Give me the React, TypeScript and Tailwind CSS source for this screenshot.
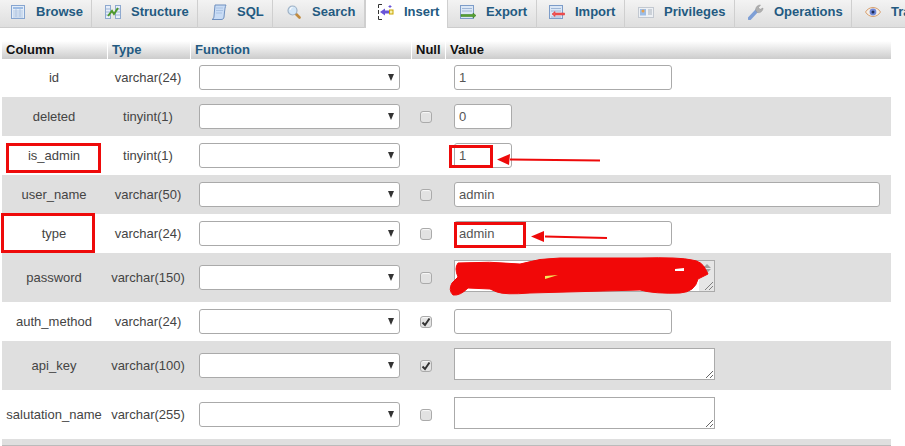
import React from 'react'

const BLUE = '#235a81'

function BrowseIcon() {
  return (
    <svg width="14" height="14" viewBox="0 0 14 14">
      <rect x="0.5" y="0.5" width="13" height="13" fill="#e3edf9" stroke="#86a5d0" />
      <rect x="2" y="2" width="10" height="2" fill="#9dbce4" />
      <path d="M2 6h10M2 8h10M2 10h10M2 12h10M5 4v8M9 4v8" stroke="#a9c0de" strokeWidth="0.8" />
    </svg>
  )
}

function StructureIcon() {
  return (
    <svg width="16" height="16" viewBox="0 0 16 16">
      <rect x="0.5" y="1.5" width="5" height="13" fill="#e6eefa" stroke="#8ea9cf" />
      <rect x="10.5" y="1.5" width="5" height="13" fill="#e6eefa" stroke="#8ea9cf" />
      <path d="M1 5h4M1 8h4M1 11h4M11 5h4M11 8h4M11 11h4" stroke="#9db5d6" />
      <path d="M3 12 L7 7 L9 10 L13 4" fill="none" stroke="#4e9a2e" strokeWidth="2" />
    </svg>
  )
}

function SqlIcon() {
  return (
    <svg width="16" height="16" viewBox="0 0 16 16">
      <path d="M4 1 H15 C14 3 14 5 13.5 8 L13 13 C12.8 15 11.5 15.5 10 15.5 H1 C2.5 15 3 13.5 3 12 Z" fill="#c9dcf5" stroke="#6e8fbf" />
      <path d="M5 4h7M5 6.500h7M5 9h6" stroke="#a9c2e4" />
    </svg>
  )
}

function SearchIcon() {
  return (
    <svg width="14" height="14" viewBox="0 0 14 14">
      <path d="M8.500 8.500 L12.500 12.500" stroke="#c08a3e" strokeWidth="2.600" strokeLinecap="round" />
      <circle cx="5.500" cy="5.500" r="4.500" fill="#d3e6f7" stroke="#9fb2c6" strokeWidth="1.200" />
      <path d="M3 5 a2.500 2.500 0 0 1 2.500 -2.500" fill="none" stroke="#fff" />
    </svg>
  )
}

function InsertIcon() {
  return (
    <svg width="16" height="16" viewBox="0 0 16 16">
      <path d="M0.500 4V0.500H4M0.500 12V15.500H4M0.500 6V10" fill="none" stroke="#333" />
      <path d="M2 8 L7 4.500 V6.500 H11 V9.500 H7 V11.500 Z" fill="#6a55d8" />
      <rect x="11.500" y="6" width="3.500" height="4" fill="#f6f1b0" stroke="#c9a400" />
      <path d="M12 1v3M10.500 2.500h3" stroke="#6a55d8" />
    </svg>
  )
}

function ExportIcon() {
  return (
    <svg width="16" height="14" viewBox="0 0 16 14">
      <rect x="0.500" y="0.500" width="13" height="13" fill="#dbe7f6" stroke="#7d9cc8" />
      <path d="M2 3.500h10M2 6h10" stroke="#9fb6d6" />
      <path d="M1 9.500H13V8L16 10.500L13 13V11.500H1Z" fill="#57a030" stroke="#2f7a1a" strokeWidth="0.500" />
    </svg>
  )
}

function ImportIcon() {
  return (
    <svg width="16" height="14" viewBox="0 0 16 14">
      <rect x="0.500" y="0.500" width="13" height="13" fill="#dbe7f6" stroke="#7d9cc8" />
      <path d="M2 3.500h10M2 6h10M2 12h10" stroke="#9fb6d6" />
      <path d="M15.500 8H6V6.500L3 9L6 11.500V10H15.500Z" fill="#f05a5a" stroke="#e02020" strokeWidth="0.500" />
    </svg>
  )
}

function PrivilegesIcon() {
  return (
    <svg width="16" height="11" viewBox="0 0 16 11">
      <rect x="0.500" y="0.500" width="15" height="10" fill="#eef1f5" stroke="#c2c8d0" />
      <rect x="2" y="2" width="6" height="6.500" fill="#9dbde6" />
      <circle cx="5" cy="4" r="1.500" fill="#e8a04a" />
      <path d="M10 3h4M10 5h4M10 7h4" stroke="#aab2bc" />
    </svg>
  )
}

function OperationsIcon() {
  return (
    <svg width="16" height="16" viewBox="0 0 16 16">
      <path d="M1.500 14.500 L9 6.500" stroke="#7e9fd6" strokeWidth="3.600" strokeLinecap="round" />
      <path d="M8 7 C7 4 9 1 12.500 1 L10.500 3.500 L12 5.500 L15 4 C15 7 12 9.500 9.500 8.500 Z" fill="#b0b0b0" stroke="#909090" strokeWidth="0.500" />
    </svg>
  )
}

function TrackingIcon() {
  return (
    <svg width="16" height="12" viewBox="0 0 16 12">
      <path d="M0.500 6 C4 0 12 0 15.500 6 C12 12 4 12 0.500 6Z" fill="#f6efe6" stroke="#d8a070" />
      <circle cx="8" cy="6" r="3.400" fill="#6f88d8" />
      <circle cx="8" cy="6" r="1.500" fill="#1e2a55" />
    </svg>
  )
}

const tabs = [
  { label: 'Browse', Icon: BrowseIcon, width: 'w-[92px]', pad: 'pl-[11px]', gap: 'w-[25px]' },
  { label: 'Structure', Icon: StructureIcon, width: 'w-[106px]', pad: 'pl-[13px]', gap: 'w-[26px]' },
  { label: 'SQL', Icon: SqlIcon, width: 'w-[75px]', pad: 'pl-[13px]', gap: 'w-[26px]' },
  { label: 'Search', Icon: SearchIcon, width: 'w-[92px]', pad: 'pl-[14px]', gap: 'w-[25px]' },
  { label: 'Insert', Icon: InsertIcon, width: 'w-[83px]', pad: 'pl-[12px]', gap: 'w-[26px]', active: true },
  { label: 'Export', Icon: ExportIcon, width: 'w-[89px]', pad: 'pl-[12px]', gap: 'w-[26px]' },
  { label: 'Import', Icon: ImportIcon, width: 'w-[88px]', pad: 'pl-[12px]', gap: 'w-[26px]' },
  { label: 'Privileges', Icon: PrivilegesIcon, width: 'w-[110px]', pad: 'pl-[13px]', gap: 'w-[26px]' },
  { label: 'Operations', Icon: OperationsIcon, width: 'w-[117px]', pad: 'pl-[13px]', gap: 'w-[26px]' },
  { label: 'Tracking', Icon: TrackingIcon, width: 'w-[120px]', pad: 'pl-[13px]', gap: 'w-[26px]' },
]

type Row = {
  name: string
  type: string
  check?: 'off' | 'on'
  value?: string
  field: 'short' | 'mid' | 'long' | 'area'
}

const rows: Row[] = [
  { name: 'id', type: 'varchar(24)', value: '1', field: 'mid' },
  { name: 'deleted', type: 'tinyint(1)', check: 'off', value: '0', field: 'short' },
  { name: 'is_admin', type: 'tinyint(1)', value: '1', field: 'short' },
  { name: 'user_name', type: 'varchar(50)', check: 'off', value: 'admin', field: 'long' },
  { name: 'type', type: 'varchar(24)', check: 'off', value: 'admin', field: 'mid' },
  { name: 'password', type: 'varchar(150)', check: 'off', field: 'area' },
  { name: 'auth_method', type: 'varchar(24)', check: 'on', value: '', field: 'mid' },
  { name: 'api_key', type: 'varchar(100)', check: 'on', field: 'area' },
  { name: 'salutation_name', type: 'varchar(255)', check: 'off', field: 'area' },
]

const inputWidths = { short: 'w-[58px]', mid: 'w-[218px]', long: 'w-[426px]' }

const gridCols = 'grid grid-cols-[106px_83px_221px_34px_445px]'

function NullBox({ state }: { state?: 'off' | 'on' }) {
  if (!state) return null
  return (
    <span className="flex h-[12px] w-[12px] items-center justify-center rounded-[3px] border border-[#aaaaaa] bg-[#e2e2e2] shadow-[inset_0_1px_1px_rgba(255,255,255,0.8)]">
      {state === 'on' && (
        <svg width="10" height="10" viewBox="0 0 10 10">
          <path d="M1.500 5.500 L4 8 L8.500 1.500" fill="none" stroke="#333" strokeWidth="2" />
        </svg>
      )}
    </span>
  )
}

function FunctionSelect() {
  return (
    <div className="relative h-[25px] w-[201px]">
      <select className="h-full w-full appearance-none rounded-[3px] border border-[#aaaaaa] bg-white" />
      <span className="pointer-events-none absolute right-[6px] top-[9px] h-0 w-0 border-x-[3.5px] border-t-[7px] border-x-transparent border-t-[#333333]" />
    </div>
  )
}

function App() {
  return (
    <div className="relative h-[446px] w-[905px] overflow-hidden bg-white font-['Liberation_Sans',sans-serif] text-[13px] text-[#444444]">
      {/* tab bar */}
      <div className="flex h-[28px] border-b border-[#cccccc] bg-gradient-to-b from-[#f3f3f3] to-[#dedede]">
        {tabs.map(({ label, Icon, width, pad, gap, active }) => (
          <div
            key={label}
            className={`flex h-[28px] shrink-0 items-center border-r border-[#cfcfcf] pb-[4px] font-bold ${width} ${pad} ${active ? 'border-l bg-white' : ''}`}
            style={{ color: BLUE }}
          >
            <span className={`flex shrink-0 items-center ${gap}`}>
              <Icon />
            </span>
            {label}
          </div>
        ))}
      </div>

      {/* insert form table */}
      <div className="ml-[2px] mt-[13px] w-[889px]">
        <div className={`${gridCols} h-[17px] font-bold leading-[18px]`}>
          <div className="border-r border-white bg-gradient-to-b from-white to-[#cccccc] pl-[4px] text-[#111111]">Column</div>
          <div className="border-r border-white bg-gradient-to-b from-white to-[#cccccc] pl-[4px] text-[#235a81]">Type</div>
          <div className="border-r border-white bg-gradient-to-b from-white to-[#cccccc] pl-[4px] text-[#235a81]">Function</div>
          <div className="border-r border-white bg-gradient-to-b from-white to-[#cccccc] pl-[4px] text-[#111111]">Null</div>
          <div className="bg-gradient-to-b from-white to-[#cccccc] pl-[4px] text-[#111111]">Value</div>
        </div>

        {rows.map((r, i) => (
          <div
            key={r.name}
            className={`${gridCols} items-center ${r.field === 'area' ? 'h-[49px]' : 'h-[39px]'} ${i % 2 === 1 ? 'bg-[#dfdfdf]' : 'bg-white'}`}
          >
            <div className="whitespace-nowrap pr-[2px] text-center">{r.name}</div>
            <div className="pr-[3px] text-center">{r.type}</div>
            <div className="pl-[8px]">
              <FunctionSelect />
            </div>
            <div className="flex justify-center pr-[6px]">
              <NullBox state={r.check} />
            </div>
            <div className="self-start pl-[8px] pt-[7px]">
              {r.field === 'area' ? (
                <textarea
                  readOnly
                  className="block h-[32px] w-[261px] border border-[#aaaaaa] bg-white"
                />
              ) : (
                <input
                  readOnly
                  value={r.value}
                  className={`block h-[25px] rounded-[3px] border border-[#aaaaaa] bg-white pl-[4px] text-[#555555] ${inputWidths[r.field]}`}
                />
              )}
            </div>
          </div>
        ))}
        <div className="h-[7px] border-b border-[#bbbbbb] bg-[#dfdfdf]" />
      </div>

      {/* scrollbar of the password box */}
      <div className="absolute left-[699px] top-[261px] flex h-[30px] w-[15px] flex-col items-center gap-[1px] bg-[#e6e6e6] pt-[3px]">
        <span className="h-0 w-0 border-x-[4px] border-b-[4px] border-x-transparent border-b-[#a0a0a0]" />
        <span className="h-0 w-0 border-x-[4px] border-t-[4px] border-x-transparent border-t-[#a0a0a0]" />
        <svg className="absolute bottom-[1px] right-[1px]" width="8" height="8" viewBox="0 0 8 8">
          <path d="M0 8 L8 0 M4 8 L8 4" stroke="#666" strokeWidth="0.800" />
        </svg>
      </div>

      {/* red markup on top of the screenshot */}
      <div className="absolute left-[6px] top-[143px] h-[30px] w-[95px] border-[3px] border-[#ee0a0a]" />
      <div className="absolute left-[1px] top-[213px] h-[40px] w-[94px] border-[3px] border-[#ee0a0a]" />
      <div className="absolute left-[449px] top-[145px] h-[23px] w-[44px] border-[3px] border-[#ee0a0a]" />
      <div className="absolute left-[454px] top-[222px] h-[26px] w-[72px] border-[3px] border-[#ee0a0a]" />

      <svg className="absolute left-0 top-0" width="905" height="446" viewBox="0 0 905 446">
        <path d="M600 160.500 L510 159.500" stroke="#ee0a0a" strokeWidth="2" />
        <path d="M497 159.500 L510 154 L509 165 Z" fill="#ee0a0a" />
        <path d="M607 238 L545 236.500" stroke="#ee0a0a" strokeWidth="2" />
        <path d="M531 236.500 L544 231 L544 242 Z" fill="#ee0a0a" />
        <path
          d="M458 263 Q490 261 520 264 Q540 258 560 258 L640 258 Q680 257 692 260 Q702 261 706 270 L708 274 L698 279 Q695 292 680 293 Q655 294 640 290 L530 293 Q505 295 497 292 L490 289 L468 288 Q460 296 453 295 Q448 290 452 283 L458 277 Q454 268 458 263 Z"
          fill="#f10808"
          stroke="#f10808"
          strokeWidth="1"
          strokeLinejoin="round"
        />
        <path d="M545 276 L558 275 L545 279 Z" fill="#f4e85a" />
        <path d="M675 269 L684 268 L684 271 L675 271 Z" fill="#ffffff" />
      </svg>
    </div>
  )
}

export default App
